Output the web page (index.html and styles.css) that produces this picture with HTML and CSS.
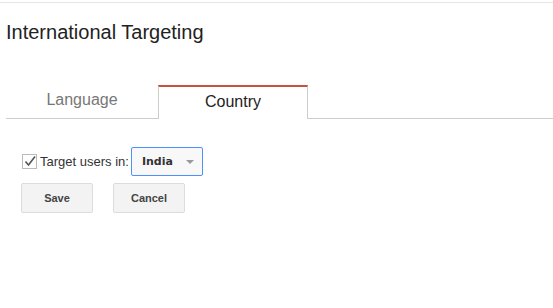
FILE: index.html
```html
<html>
<head>
<link rel="stylesheet" href="styles.css">
</head>
<body>
<div class="topline"></div>
<h1 class="title">International Targeting</h1>

<div class="tabs">
	<div class="tab">Language</div>
	<div class="tab active">Country</div>
</div>

<div class="panel">
	<div class="row">
		<label class="check">
			<span class="box">
				<svg width="14" height="14" viewBox="0 0 14 14"><path d="M2.5 7.5 L5.5 11 L12 2.5" fill="none" stroke="#555" stroke-width="1.6"/></svg>
			</span>
			Target users in:
		</label>
		<div class="select">
			<span>India</span>
			<span class="arrow"></span>
		</div>
	</div>
	<div class="buttons">
		<button class="btn">Save</button>
		<button class="btn">Cancel</button>
	</div>
</div>
</body>
</html>
```

FILE: styles.css
```css
body {
	margin: 0;
	font-family: "Liberation Sans", Arial, sans-serif;
	background: #fff;
	color: #222;
}
.topline {
	margin-top: 2px;
	height: 1px;
	background: #e5e5e5;
}
.title {
	font-size: 20px;
	font-weight: normal;
	margin: 18px 0 0 6px;
	color: #222;
}
.tabs {
	display: flex;
	margin: 41px 0 0 6px;
	border-bottom: 1px solid #ccc;
	height: 33px;
}
.tab {
	width: 152px;
	text-align: center;
	font-size: 16px;
	line-height: 29px;
	color: #777;
	box-sizing: border-box;
}
.tab.active {
	width: 150px;
	color: #222;
	border: 1px solid #ccc;
	border-top: 2px solid #c5543f;
	border-bottom: none;
	background: #fff;
	margin-bottom: -1px;
	height: 34px;
}
.panel {
	padding: 28px 0 0 21px;
}
.row {
	display: flex;
	align-items: center;
}
.check {
	display: flex;
	align-items: center;
	font-size: 13px;
	color: #333;
}
.box {
	width: 13px;
	height: 13px;
	border: 1px solid #bbb;
	margin: 0 3px 0 1px;
	position: relative;
}
.box svg {
	position: absolute;
	left: 0;
	top: -1px;
}
.select {
	margin-left: 2px;
	height: 27px;
	border: 1px solid #4d90fe;
	border-radius: 2px;
	background: #f8f8f8;
	display: flex;
	align-items: center;
	justify-content: space-between;
	padding: 0 8px 0 10px;
	width: 52px;
	font-family: "DejaVu Sans", Verdana, sans-serif;
	font-weight: bold;
	font-size: 11px;
	color: #333;
}
.arrow {
	width: 0;
	height: 0;
	border-left: 4px solid transparent;
	border-right: 4px solid transparent;
	border-top: 4px solid #999;
}
.buttons {
	display: flex;
	gap: 20px;
	margin-top: 7px;
}
.btn {
	width: 72px;
	height: 30px;
	border: 1px solid #dcdcdc;
	border-radius: 2px;
	background: #f3f3f3;
	font-family: "Liberation Sans", Arial, sans-serif;
	font-weight: bold;
	font-size: 11px;
	color: #444;
	padding: 0;
}
```
